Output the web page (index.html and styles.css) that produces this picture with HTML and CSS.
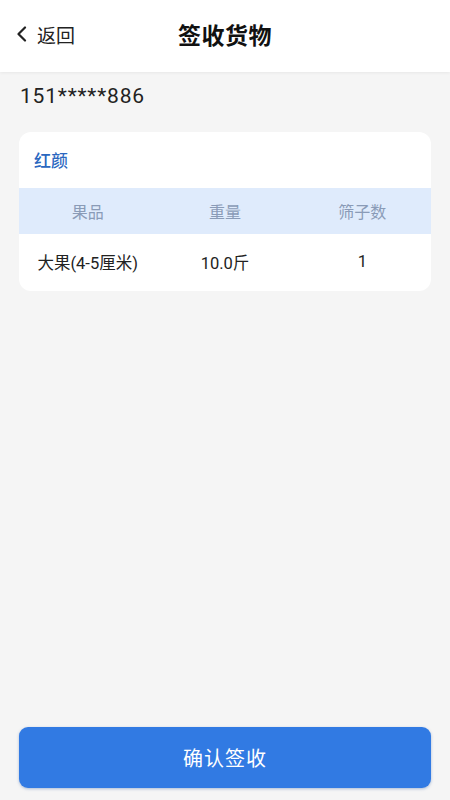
FILE: index.html
```html
<!DOCTYPE html>
<html lang="zh">
<head>
<meta charset="utf-8">
<link rel="stylesheet" href="styles.css">
</head>
<body>
<div class="page">
  <header class="nav">
    <div class="back">
      <svg class="chev" width="12" height="16" viewBox="0 0 12 16"><path d="M9 1.5 L2.5 8 L9 14.5" fill="none" stroke="#222" stroke-width="2.2" stroke-linecap="round" stroke-linejoin="round"/></svg>
      <span>返回</span>
    </div>
    <div class="title">签收货物</div>
  </header>
  <div class="phone">151*****886</div>
  <section class="card">
    <div class="card-title">红颜</div>
    <div class="row head">
      <div>果品</div><div>重量</div><div>筛子数</div>
    </div>
    <div class="row body">
      <div>大果(4-5厘米)</div><div>10.0斤</div><div>1</div>
    </div>
  </section>
  <div class="spacer"></div>
  <div class="footer">
    <button class="confirm">确认签收</button>
  </div>
</div>
</body>
</html>
```
FILE: styles.css
```css
* { box-sizing: border-box; }
html, body { margin: 0; padding: 0; }
body {
  background: #f5f5f5;
  font-family: Roboto, "Noto Sans CJK SC", "Noto Sans", sans-serif;
  color: #222;
}
.page {
  width: 450px;
  height: 800px;
  display: flex;
  flex-direction: column;
}
.nav {
  height: 72px;
  background: #fff;
  position: relative;
  display: flex;
  align-items: center;
  justify-content: center;
  box-shadow: 0 1px 3px rgba(0,0,0,0.06);
}
.back {
  position: absolute;
  left: 16px;
  top: 0;
  height: 68px;
  display: flex;
  align-items: center;
  gap: 9px;
  font-size: 19px;
  color: #222;
}
.chev { display: block; }
.title {
  font-size: 23px;
  font-weight: 700;
  color: #111;
  margin-top: -4px;
  letter-spacing: 0.5px;
}
.phone {
  padding: 12px 20px 0;
  font-size: 21px;
  line-height: 24px;
  letter-spacing: 0.8px;
  color: #222;
}
.card {
  margin: 24px 19px 0;
  background: #fff;
  border-radius: 12px;
  overflow: hidden;
}
.card-title {
  height: 56px;
  padding: 18px 15px 0;
  font-size: 17px;
  line-height: 22px;
  color: #2a67bf;
  font-weight: 500;
}
.row {
  display: grid;
  grid-template-columns: 1fr 1fr 1fr;
  text-align: center;
}
.row.head {
  height: 46px;
  background: #dfebfc;
  color: #8a9bb7;
  font-size: 16px;
  align-items: center;
}
.row.body {
  height: 57px;
  font-size: 16.5px;
  color: #222;
  align-items: center;
  padding-bottom: 2px;
}
.spacer { flex: 1; }
.footer {
  padding: 0 19px 12px;
}
.confirm {
  width: 100%;
  height: 61px;
  border: none;
  border-radius: 9px;
  background: #317ae3;
  color: #fff;
  font-family: inherit;
  font-size: 20px;
  letter-spacing: 1px;
  box-shadow: 0 1px 3px rgba(30,80,160,0.35);
}
```
